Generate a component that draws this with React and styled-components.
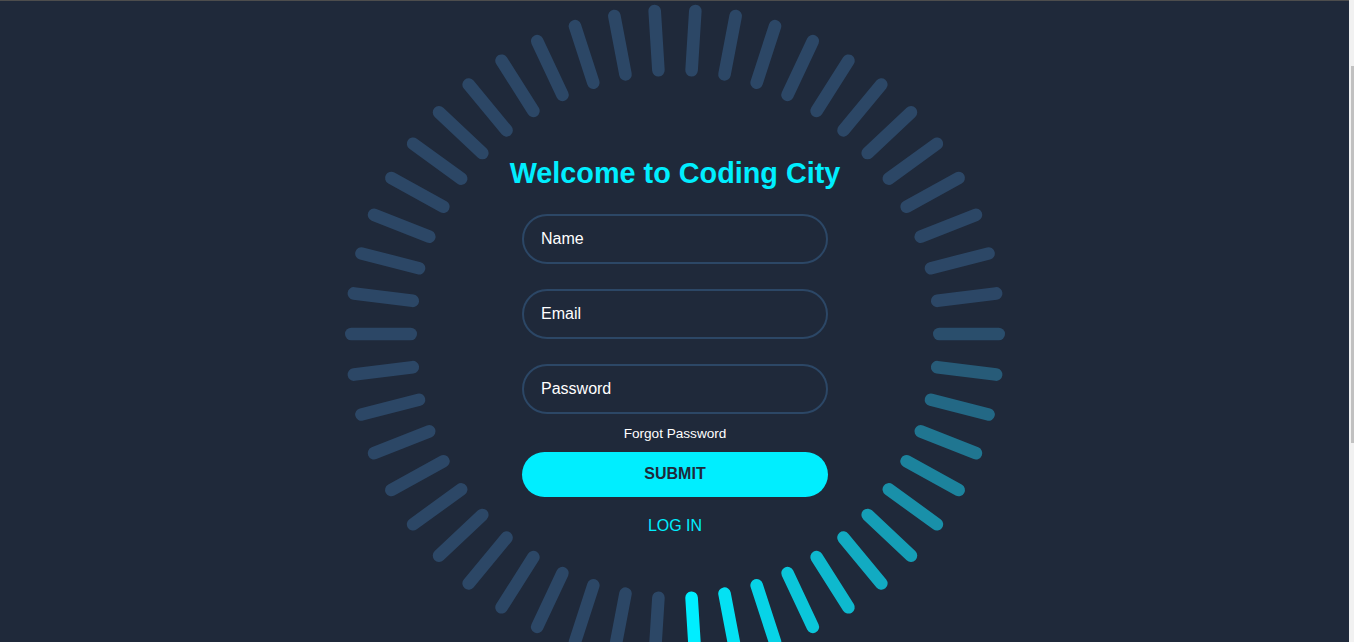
import React from "react";
import styled, { createGlobalStyle } from "styled-components";

const GlobalStyle = createGlobalStyle`
  html, body {
    margin: 0;
    padding: 0;
    height: 100%;
  }
  body {
    background: #1f293a;
    font-family: "Liberation Sans", Arial, sans-serif;
    overflow: hidden;
  }
`;

const Page = styled.div`
  display: flex;
  height: 100vh;
`;

const Main = styled.main`
  flex: 1;
  display: flex;
  justify-content: center;
  padding-left: 1px;
  border-top: 1px solid #4d4d4d;
  overflow: hidden;
`;

const Stage = styled.section`
  display: grid;
  flex-shrink: 0;
  width: 660px;
  height: 660px;
  margin-top: 3px;
  & > * {
    grid-area: 1 / 1;
  }
`;

const Ring = styled.svg`
  width: 660px;
  height: 660px;
`;

const Form = styled.form`
  display: flex;
  flex-direction: column;
  align-items: center;
  align-self: start;
  justify-self: center;
  padding-top: 153px;
`;

const Title = styled.h2`
  margin: 0 0 24px;
  font-size: 28.8px;
  font-weight: 700;
  color: #00eeff;
  white-space: nowrap;
`;

const Field = styled.input`
  box-sizing: border-box;
  width: 306px;
  height: 50px;
  margin-bottom: ${(p) => (p.last ? "0" : "25px")};
  padding: 0 17px;
  border: 2px solid #2c4766;
  border-radius: 40px;
  background: transparent;
  color: #fff;
  font-family: inherit;
  font-size: 16px;
  outline: none;
  &::placeholder {
    color: #fff;
    opacity: 1;
  }
`;

const Forgot = styled.a`
  margin-top: 12px;
  font-size: 13.6px;
  color: #fff;
  text-decoration: none;
`;

const Submit = styled.button`
  width: 306px;
  height: 45px;
  margin-top: 11px;
  padding: 0 0 2px;
  border: none;
  border-radius: 40px;
  background: #00eeff;
  color: #1f293a;
  font-family: inherit;
  font-size: 16px;
  font-weight: 700;
  cursor: pointer;
`;

const LogIn = styled.a`
  margin-top: 20px;
  font-size: 16px;
  color: #00eeff;
  text-decoration: none;
`;

const Rail = styled.div`
  box-sizing: border-box;
  width: 5px;
  padding-left: 2px;
  background: #f1f1f1;
  display: flex;
  flex-direction: column;
`;

const Thumb = styled.div`
  margin-top: 66px;
  height: 377px;
  background: #c1c1c1;
`;

// 50 bars, snapshot of the blink animation: bar 37 is at full glow,
// the ones before it fade back to the base colour over a quarter cycle
const BASE = [44, 71, 102];
const GLOW = [0, 238, 255];
const LEAD = 37;

const barColor = (i) => {
  const phase = ((LEAD - i + 50) % 50) * 0.02;
  if (phase >= 0.25) return `rgb(${BASE.join(",")})`;
  const t = phase / 0.25;
  const c = GLOW.map((g, n) => Math.round(g + (BASE[n] - g) * t));
  return `rgb(${c.join(",")})`;
};

const bars = Array.from({ length: 50 }, (_, i) => {
  const a = ((180 + 7.2 * i) * Math.PI) / 180;
  const r1 = 264.3;
  const r2 = 323.7;
  return {
    i,
    x1: 330 + r1 * Math.cos(a),
    y1: 330 + r1 * Math.sin(a),
    x2: 330 + r2 * Math.cos(a),
    y2: 330 + r2 * Math.sin(a),
    color: barColor(i),
  };
});

export default function App() {
  return (
    <>
      <GlobalStyle />
      <Page>
        <Main>
          <Stage>
            <Ring viewBox="0 0 660 660">
              {bars.map((b) => (
                <line
                  key={b.i}
                  x1={b.x1}
                  y1={b.y1}
                  x2={b.x2}
                  y2={b.y2}
                  stroke={b.color}
                  strokeWidth="12.6"
                  strokeLinecap="round"
                />
              ))}
            </Ring>
            <Form onSubmit={(e) => e.preventDefault()}>
              <Title>Welcome to Coding City</Title>
              <Field type="text" placeholder="Name" />
              <Field type="email" placeholder="Email" />
              <Field type="password" placeholder="Password" last />
              <Forgot href="#">Forgot Password</Forgot>
              <Submit type="submit">SUBMIT</Submit>
              <LogIn href="#">LOG IN</LogIn>
            </Form>
          </Stage>
        </Main>
        <Rail>
          <Thumb />
        </Rail>
      </Page>
    </>
  );
}
